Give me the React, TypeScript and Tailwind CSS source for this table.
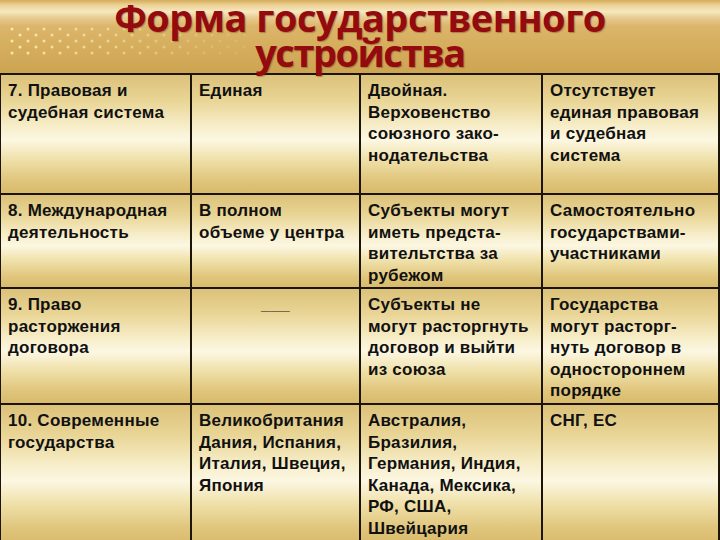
import React from "react";

type Cell = string[];
type Row = { h: string; cells: Cell[] };

const rows: Row[] = [
  {
    h: "h-[120px]",
    cells: [
      ["7. Правовая и", "судебная система"],
      ["Единая"],
      ["Двойная.", "Верховенство", "союзного зако-", "нодательства"],
      ["Отсутствует", "единая правовая", "и судебная", "система"],
    ],
  },
  {
    h: "h-[94px]",
    cells: [
      ["8. Международная", "деятельность"],
      ["В полном", "объеме у центра"],
      ["Субъекты могут", "иметь предста-", "вительтства за", "рубежом"],
      ["Самостоятельно", "государствами-", "участниками"],
    ],
  },
  {
    h: "h-[116px]",
    cells: [
      ["9. Право", "расторжения", "договора"],
      ["___"],
      ["Субъекты не", "могут расторгнуть", "договор и выйти", "из союза"],
      ["Государства", "могут расторг-", "нуть договор в", "одностороннем", "порядке"],
    ],
  },
  {
    h: "h-[140px]",
    cells: [
      ["10. Современные", "государства"],
      ["Великобритания", "Дания, Испания,", "Италия, Швеция,", "Япония"],
      ["Австралия,", "Бразилия,", "Германия, Индия,", "Канада, Мексика,", "РФ, США,", "Швейцария"],
      ["СНГ, ЕС"],
    ],
  },
];

const widths = ["w-[191px]", "w-[169px]", "w-[182px]", "w-[177px]"];

function Dots() {
  const dots: React.ReactNode[] = [];
  const ys = [29, 35, 41, 47, 53];
  ys.forEach((y, r) => {
    for (let i = 0; i < 15; i++) {
      const x = 12 + i * 16 + (r % 2 === 1 ? 8 : 0);
      const fade = Math.max(0.15, 1 - i / 16);
      dots.push(<circle key={`${r}-${i}`} cx={x} cy={y} r={1.5} fill="#fcefb4" opacity={0.9 * fade} />);
    }
  });
  return (
    <svg className="absolute left-0 top-0" width="260" height="70" viewBox="0 0 260 70">
      {dots}
    </svg>
  );
}

export default function App() {
  return (
    <div className="w-[720px] h-[540px] overflow-hidden bg-[#d8b565]">
      <div className="relative h-[73px] bg-[linear-gradient(to_bottom,#d6ab5a_0%,#ecd296_7%,#f6e8c0_16%,#e8cc94_24%,#dbb56a_36%,#d5ad5d_65%,#cda452_100%)]">
        <Dots />
        <div
          className="relative flex flex-col items-center text-[38px] leading-[35px] font-bold text-[#930a0f] pt-[0px]"
          style={{ fontFamily: "'Open Sans', 'Noto Sans', sans-serif" }}
        >
          <div className="tracking-[-0.5px] [text-shadow:1px_1px_1px_rgba(80,40,0,0.35)]">Форма государственного</div>
          <div className="tracking-[-1.5px] [text-shadow:1px_1px_1px_rgba(80,40,0,0.35)]">устройства</div>
        </div>
      </div>
      <div
        className="border-t-2 border-l border-[#1c1408] text-[17px] leading-[21.5px] font-bold tracking-[0.25px] text-[#111]"
        style={{ fontFamily: "'Liberation Sans', Arial, sans-serif" }}
      >
        {rows.map((row, ri) => (
          <div key={ri} className={`flex ${row.h}`}>
            {row.cells.map((cell, ci) => (
              <div
                key={ci}
                className={`${widths[ci]} shrink-0 box-border border-r-2 border-b-2 border-[#1c1408] pl-[7px] pt-[5px] bg-[linear-gradient(to_bottom,#dcc27a_0%,#e9d596_22%,#f6ecc6_42%,#fcf7e2_55%,#efe0a8_72%,#dfc47a_90%,#d8bb6c_100%)] ${
                  cell[0] === "___" ? "text-center pr-[7px]" : ""
                }`}
              >
                {cell.map((line, li) => (
                  <div key={li} className="whitespace-nowrap">
                    {line}
                  </div>
                ))}
              </div>
            ))}
          </div>
        ))}
      </div>
    </div>
  );
}
